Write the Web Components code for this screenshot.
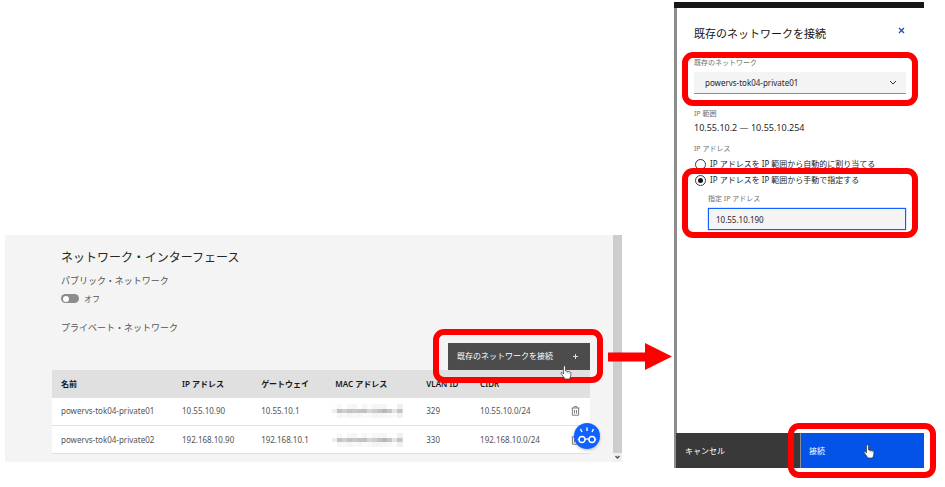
<!DOCTYPE html>
<html lang="ja">
<head>
<meta charset="utf-8">
<title>既存のネットワークを接続</title>
<style>
*{box-sizing:border-box}
body{margin:0;background:#fff;font-family:"Noto Sans","Noto Sans CJK JP",sans-serif;font-size:8px;line-height:12px;color:#262626}
</style>
</head>
<body>
<guide-page></guide-page>
<script>
const define = (name, html, extra) => {
  const template = document.createElement('template');
  template.innerHTML = '<style>*{box-sizing:border-box}button,input,select{font:inherit;color:inherit;border:0;border-radius:0;margin:0;padding:0;background:none;outline:0}h1,h2,h3,p{margin:0;font-weight:400}</style>' + html;
  customElements.define(name, class extends HTMLElement {
    constructor() {
      super();
      this.attachShadow({mode: 'open'}).append(template.content.cloneNode(true));
      if (extra) extra(this.shadowRoot, this);
    }
  });
};

define('call-out', `
<style>
:host{display:block;position:relative}
.frame{position:absolute;inset:var(--frame-inset);border:6px solid #f00;border-radius:11px;pointer-events:none;z-index:3}
</style>
<slot></slot><span class="frame"></span>`);

define('hand-cursor', `
<style>:host{position:absolute;width:12px;height:15px;z-index:4;pointer-events:none}svg{display:block}</style>
<svg width="12" height="15" viewBox="0 0 12 15"><path d="M3.5 9V2q0-1.300 1-1.300t1 1.300v4l4.200.8q1.500.4 1.300 2l-.7 3.500-.8 1.700H5L2 9.800 1 8.200q.2-1.200 1.300-.6z" fill="#fff" stroke="#333" stroke-width=".7"/><path d="M7.300 6.500v2M9.200 7v1.800" stroke="#777" stroke-width=".5"/></svg>`);

define('flow-arrow', `
<style>:host{display:block;width:64px;height:28px}svg{display:block}</style>
<svg width="64" height="28" viewBox="0 0 64 28"><path d="M0 9.500h37V0l27 13.500L37 27v-8.500H0z" fill="#f00"/></svg>`);

define('toggle-switch', `
<style>
:host{display:block}
label{display:flex;align-items:center;gap:5px;color:#525252}
input{appearance:none;width:18px;height:9px;border-radius:5px;background:#8d8d8d;display:flex;align-items:center;padding-left:2px}
input::before{content:"";width:6px;height:6px;border-radius:50%;background:#fff}
</style>
<label><input type="checkbox" role="switch"><slot></slot></label>`);

define('masked-value', `
<style>:host{display:block}svg{display:block}</style>
<svg width="71" height="14" viewBox="0 0 71 14" shape-rendering="crispEdges"></svg>`, root => {
  const tones = [
    ['#fefefe','#f8f8f8','#fff','#f8f8f8','#f5f5f5','#fff','#f6f6f6','#fdfdfd','#f6f6f6','#f6f6f6','#f6f6f6','#fdfdfd','#fff','#eef1f2','#eef1f2'],
    ['#f2eeea','#c2c3c6','#d2cecb','#bfc3ca','#cbc8c6','#c2c3c5','#c1c1c1','#d4d6d9','#d0ccc8','#c3c3c3','#b6b7b9','#c4c6c9','#e6e4e2','#c2c4c7','#d0d8e0'],
    ['#fff','#f6f6f6','#f8f8f8','#f4f4f4','#f8f8f8','#f6f6f6','#fafafa','#f8f8f8','#f4f4f4','#f4f4f4','#f6f6f6','#f8f8f8','#fafafa','#eef1f2','#eef1f2']
  ];
  const svg = root.querySelector('svg');
  tones.forEach((row, y) => row.forEach((fill, x) => {
    const r = document.createElementNS('http://www.w3.org/2000/svg', 'rect');
    for (const [k, v] of Object.entries({x: x * 5, y: [0, 5, 9][y], width: 5, height: [5, 4, 5][y], fill})) r.setAttribute(k, v);
    svg.append(r);
  }));
});

define('trash-button', `
<style>:host{display:block}button{display:block}svg{display:block}</style>
<button type="button" aria-label="削除"><svg width="9" height="10" viewBox="0 0 9 10" fill="none" stroke="#6f6f6f" stroke-width=".9"><path d="M.5 2h8M3 1.800V.6h3v1.200M1.400 2.200v7h6.200v-7M3.500 4v3.500M5.500 4v3.500"/></svg></button>`);

define('network-table', `
<style>
:host{display:block}
table{width:100%;border-collapse:collapse;table-layout:fixed;background:#fff;color:#525252}
th,td{padding:0 0 0 9px;text-align:left;white-space:nowrap}
th{height:28px;background:#e0e0e0;color:#161616;font-weight:600}
td{height:28px;border-bottom:1px solid #e0e0e0}
td:nth-child(4){padding-left:6px}
td:last-child{padding-left:8px}
</style>
<table>
<colgroup><col style="width:22.500%"><col style="width:14.700%"><col style="width:13.800%"><col style="width:16.900%"><col style="width:10%"><col style="width:17%"><col></colgroup>
<thead><tr><th>名前</th><th>IP アドレス</th><th>ゲートウェイ</th><th>MAC アドレス</th><th>VLAN ID</th><th>CIDR</th><th></th></tr></thead>
<tbody>
<tr><td>powervs-tok04-private01</td><td>10.55.10.90</td><td>10.55.10.1</td><td><masked-value></masked-value></td><td>329</td><td>10.55.10.0/24</td><td><trash-button></trash-button></td></tr>
<tr><td>powervs-tok04-private02</td><td>192.168.10.90</td><td>192.168.10.1</td><td><masked-value></masked-value></td><td>330</td><td>192.168.10.0/24</td><td><trash-button></trash-button></td></tr>
</tbody></table>`);

define('help-bubble', `
<style>:host{position:absolute;right:-10px;bottom:5px;z-index:2}button{display:block;width:26px;height:26px;border-radius:50%;background:#0f62fe;box-shadow:0 1px 3px #0004}svg{display:block}</style>
<button type="button" aria-label="ヘルプ"><svg width="26" height="26" viewBox="0 0 26 26" fill="none" stroke="#fff" stroke-width="1.400"><circle cx="8" cy="16.500" r="3"/><circle cx="18" cy="16.500" r="3"/><path d="M11 16.500q2-1.200 4 0M3.800 16.500h1M21.200 16.500h1M13 4.500v3.500M6.500 6l1.500 3M19.500 6 18 9"/></svg></button>`);

define('scroll-rail', `
<style>:host{display:flex;flex-direction:column;width:9px;background:#cdcdcd}span{margin-top:auto;height:9px;background:#f1f1f1;display:grid;place-items:center}</style>
<span><svg width="7" height="5" viewBox="0 0 7 5" fill="none" stroke="#555" stroke-width="1.500"><path d="m1.500 1 2 2 2-2"/></svg></span>`);

define('interface-panel', `
<style>
:host{display:flex;background:#f4f4f4}
.body{flex:1;min-width:0;padding:15px 23px 8px 47px}
.intro{padding-left:9px;display:flex;flex-direction:column;align-items:flex-start}
h2{font-size:12px;line-height:16px;color:#262626}
h3{font-size:9px;line-height:14px;color:#525252}
.public{margin-top:8px}
toggle-switch{margin-top:5px}
.private{margin-top:16px}
.tools{display:flex;justify-content:flex-end;margin-top:8px}
call-out{--frame-inset:-14px -13px -13px -15px}
.attach{display:flex;align-items:center;justify-content:space-between;width:142px;height:27px;padding:0 11px 0 9px;background:#4c4c4c;color:#fff}
hand-cursor{right:18px;bottom:-10px}
.list{position:relative}
</style>
<div class="body">
<div class="intro"><h2>ネットワーク・インターフェース</h2><h3 class="public">パブリック・ネットワーク</h3><toggle-switch>オフ</toggle-switch><h3 class="private">プライベート・ネットワーク</h3></div>
<div class="tools"><call-out><button class="attach" type="button"><span>既存のネットワークを接続</span><svg width="7" height="7" viewBox="0 0 7 7" stroke="#ddd" fill="none"><path d="M3.500 1v5M1 3.500h5"/></svg></button><hand-cursor></hand-cursor></call-out></div>
<div class="list"><network-table></network-table><help-bubble></help-bubble></div>
</div>
<scroll-rail></scroll-rail>`);

define('attach-drawer', `
<style>
:host{display:flex;flex-direction:column;background:#fff;border-top:6px solid #161616}
.main{flex:1;border-left:3px solid #8d8d8d;padding:15px 18px 0 17px}
header{display:flex;justify-content:space-between;align-items:flex-start;height:22px}
h1{font-size:11px;line-height:22px;color:#161616}
.close{width:8px;height:14px}.close svg{display:block}
.label{display:block;font-size:7px;line-height:10px;color:#6f6f6f}
.net{margin-top:13px;--frame-inset:-6px -12px -12px -12px}
.pick{display:grid;align-items:center;margin-top:4px}
select,.pick svg{grid-area:1/1}
select{appearance:none;width:100%;height:22px;padding-left:11px;background:#f4f4f4;border-bottom:1px solid #8d8d8d;color:#262626}
.pick svg{justify-self:end;margin-right:9px;pointer-events:none}
.range{margin-top:15px}
.value{font-size:9px;line-height:14px;margin-top:2px}
fieldset{border:0;margin:9px 0 0;padding:0;min-width:0}
legend{padding:0}
.choice{display:flex;align-items:center;gap:4px;height:12px;padding-left:1px;white-space:nowrap}
.auto{margin-top:4px}
.manual{margin-top:4px;--frame-inset:-6px -12px -8px -12px}
input[type=radio]{appearance:none;width:11px;height:11px;border:1px solid #393939;border-radius:50%;display:grid;place-items:center;background:#fff}
input[type=radio]:checked::before{content:"";width:5px;height:5px;border-radius:50%;background:#161616}
.entry{padding:8px 0 0 14px}
.entry input{display:block;width:100%;height:22px;margin-top:4px;padding:0 7px;background:#f4f4f4;border:1px solid #0f62fe;box-shadow:0 0 1px #0f62fe}
footer{display:grid;grid-template-columns:minmax(0,1fr) minmax(0,1fr);height:35px;background:#393939;border-left:2px solid #8d8d8d}
footer button{width:100%;height:35px;text-align:left;padding-left:9px;color:#fff}
footer call-out{--frame-inset:-10px -12px -10px -12px}
footer .connect{background:#0353e9;border-left:1px solid #8d8d8d;padding-left:8px}
hand-cursor{right:49px;top:11px}
</style>
<div class="main">
<header><h1>既存のネットワークを接続</h1><button class="close" type="button" aria-label="閉じる"><svg width="7" height="7" viewBox="0 0 7 7" stroke="#1f4fb0" stroke-width="1.300" fill="none"><path d="m1 1 5 5m0-5L1 6"/></svg></button></header>
<call-out class="net"><label class="label" for="net">既存のネットワーク</label><div class="pick"><select id="net"><option>powervs-tok04-private01</option></select><svg width="8" height="6" viewBox="0 0 8 6" fill="none" stroke="#393939"><path d="m1 1 3 3 3-3"/></svg></div></call-out>
<p class="label range">IP 範囲</p><p class="value">10.55.10.2 — 10.55.10.254</p>
<fieldset><legend class="label">IP アドレス</legend>
<label class="choice auto"><input type="radio" name="ip"><span>IP アドレスを IP 範囲から自動的に割り当てる</span></label>
<call-out class="manual"><label class="choice"><input type="radio" name="ip" checked><span>IP アドレスを IP 範囲から手動で指定する</span></label>
<div class="entry"><label class="label" for="addr">指定 IP アドレス</label><input id="addr" type="text" value="10.55.10.190"></div></call-out>
</fieldset>
</div>
<footer><button type="button">キャンセル</button><call-out><button class="connect" type="button">接続</button><hand-cursor></hand-cursor></call-out></footer>`);

define('guide-page', `
<style>
:host{display:grid;grid-template-columns:minmax(0,617fr) 52px minmax(0,250fr);min-height:100vh;padding:2px 21px 19px 5px}
interface-panel{align-self:end;margin-bottom:6px}
.link{align-self:end;position:relative;z-index:4;margin:0 0 97px -14px}
</style>
<interface-panel></interface-panel><flow-arrow class="link"></flow-arrow><attach-drawer></attach-drawer>`);
</script>
</body>
</html>
